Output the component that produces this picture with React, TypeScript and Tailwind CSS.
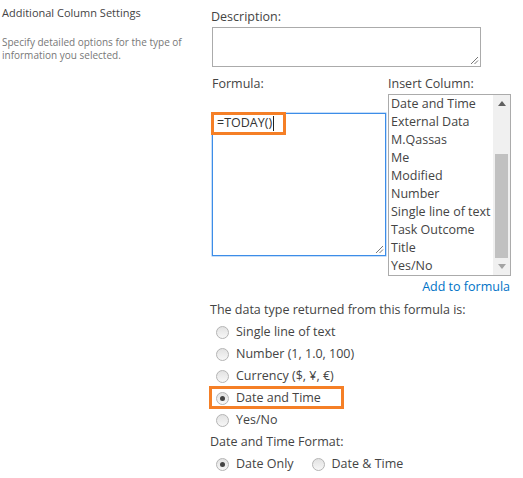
import React from "react";

const font = { fontFamily: '"Open Sans", "Noto Sans", sans-serif' };

function Grip() {
  return (
    <svg className="absolute right-[1px] bottom-[1px]" width="10" height="10" viewBox="0 0 10 10">
      <line x1="9" y1="2" x2="2" y2="9" stroke="#777" strokeWidth="1" />
      <line x1="9" y1="5.5" x2="5.5" y2="9" stroke="#777" strokeWidth="1" />
    </svg>
  );
}

function Radio({ checked }: { checked?: boolean }) {
  return (
    <span className="relative inline-flex items-center justify-center w-[13px] h-[13px] rounded-full border border-[#b4b4b4] bg-gradient-to-b from-[#e2e2e2] to-[#f7f7f7] shrink-0">
      {checked && <span className="w-[5px] h-[5px] rounded-full bg-[#444]" />}
    </span>
  );
}

function RadioRow({ label, checked }: { label: string; checked?: boolean }) {
  return (
    <div className="h-[22px] flex items-center pl-[6px] gap-[7px]">
      <Radio checked={checked} />
      <span>{label}</span>
    </div>
  );
}

const columns = [
  "Date and Time",
  "External Data",
  "M.Qassas",
  "Me",
  "Modified",
  "Number",
  "Single line of text",
  "Task Outcome",
  "Title",
  "Yes/No",
];

export default function App() {
  return (
    <div
      className="relative w-[523px] h-[478px] bg-white flex text-[12.5px] text-[#444] overflow-hidden"
      style={font}
    >
      <div className="w-[208px] pl-[2px] pt-[4px] shrink-0">
        <div className="text-[11px] leading-[18px] text-[#444]">Additional Column Settings</div>
        <div className="mt-[14px] text-[10px] leading-[13px] text-[#777] w-[190px]">
          Specify detailed options for the type of information you selected.
        </div>
      </div>

      <div className="flex flex-col pl-[2px] w-[305px]">
        <div className="mt-[8px] leading-[18px] pl-[1px]">Description:</div>
        <div className="relative ml-[2px] mt-[1px] w-[269px] h-[40px] border border-[#ababab]">
          <Grip />
        </div>

        <div className="flex mt-[8px] ml-[2px]">
          <div className="w-[176px] flex flex-col">
            <div className="leading-[18px]">Formula:</div>
            <div className="relative mt-[20px] w-[174px] h-[143px] border border-[#3c8de8] shadow-[0_0_0_0.5px_#8fbdf0]">
              <div className="absolute left-[-2px] top-[-2px] w-[75px] h-[23px] border-[3px] border-[#f57f26] flex items-center pl-[3px]">
                <span className="text-[#333]">=TODAY()</span>
                <span className="ml-[1px] w-[1px] h-[15px] bg-[#222]" />
              </div>
              <Grip />
            </div>
          </div>
          <div className="flex flex-col">
            <div className="leading-[18px]">Insert Column:</div>
            <div className="mt-[1px] w-[123px] h-[182px] border border-[#ababab] flex">
              <div className="flex-1 pl-[2px] text-[#444]">
                {columns.map((c) => (
                  <div key={c} className="leading-[18px] whitespace-nowrap">
                    {c}
                  </div>
                ))}
              </div>
              <div className="w-[17px] bg-[#f0f0f0] flex flex-col items-center">
                <div className="h-[17px] flex items-center justify-center">
                  <svg width="8" height="5" viewBox="0 0 8 5">
                    <polygon points="4,0 8,5 0,5" fill="#606060" />
                  </svg>
                </div>
                <div className="mt-[42px] w-[13px] h-[104px] bg-[#c1c1c1]" />
                <div className="flex-1 flex items-end justify-center pb-[6px]">
                  <svg width="8" height="5" viewBox="0 0 8 5">
                    <polygon points="0,0 8,0 4,5" fill="#a3a3a3" />
                  </svg>
                </div>
              </div>
            </div>
          </div>
        </div>

        <div className="h-[23px] flex items-center justify-end pr-[3px] text-[#0072c6]">Add to formula</div>

        <div className="h-[22px] leading-[22px]">The data type returned from this formula is:</div>
        <RadioRow label="Single line of text" />
        <RadioRow label="Number (1, 1.0, 100)" />
        <RadioRow label="Currency ($, ¥, €)" />
        <div className="relative">
          <RadioRow label="Date and Time" checked />
          <div className="absolute left-[-1px] top-[-1px] w-[135px] h-[23px] border-[3px] border-[#f57f26]" />
        </div>
        <RadioRow label="Yes/No" />
        <div className="h-[22px] leading-[22px]">Date and Time Format:</div>
        <div className="h-[22px] flex items-center">
          <RadioRow label="Date Only" checked />
          <div className="ml-[12px]">
            <RadioRow label="Date & Time" />
          </div>
        </div>
      </div>
    </div>
  );
}
